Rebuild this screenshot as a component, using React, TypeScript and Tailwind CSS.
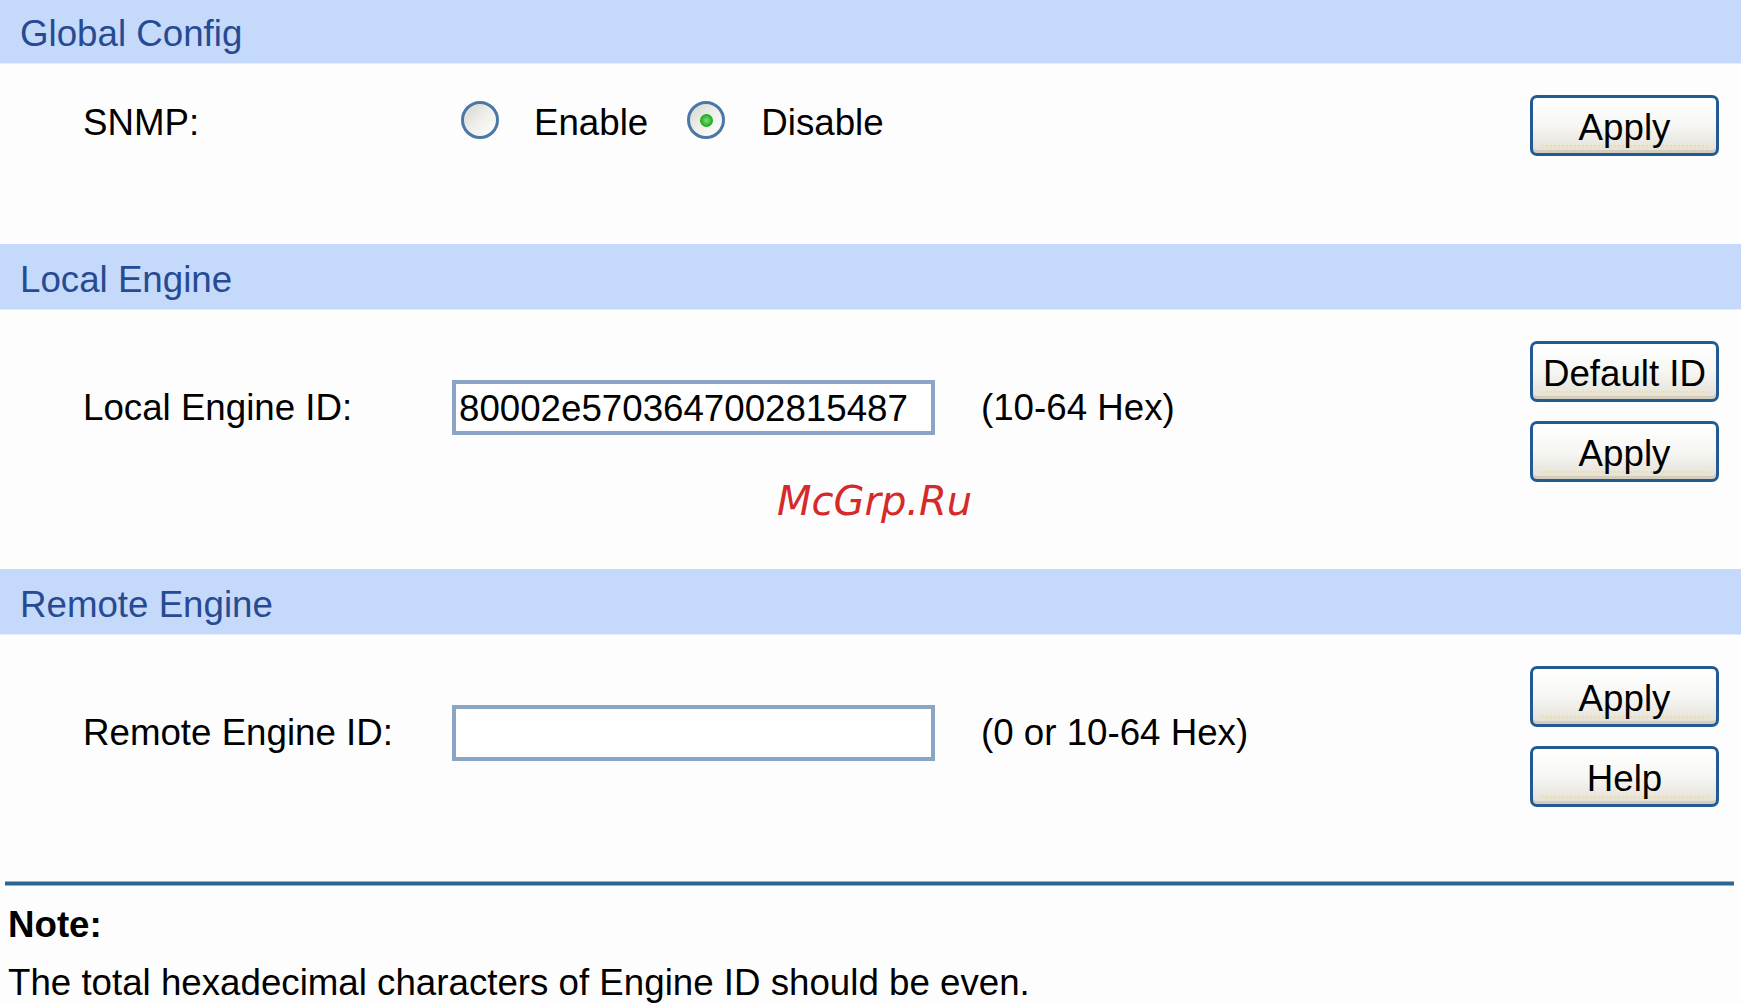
import React from 'react';

const SectionHeader = ({ title, tall = true }: { title: string; tall?: boolean }) => (
  <div
    className={`${tall ? 'h-[66px] pt-[6px]' : 'h-[64px] pt-[4px]'} bg-[#c5d9fb] pl-[20px] flex items-center text-[#274b92] border-b border-[#e4edfd]`}
  >
    {title}
  </div>
);

const XpButton = ({ label }: { label: string }) => (
  <button className="relative w-[189px] h-[61px] rounded-[7px] border-[3px] border-[#235a93] bg-gradient-to-b from-[#ffffff] via-[#f6f6f3] to-[#e2dfd6] text-black leading-none shadow-[inset_0_-3px_0_#d3cdbf]">
    <span className="absolute left-[8px] right-[8px] bottom-[6px] border-b-2 border-dotted border-[#f1dc9c]" />
    <span className="relative top-[3px]">{label}</span>
  </button>
);

const Radio = ({ checked }: { checked?: boolean }) => (
  <span className="w-[38px] h-[38px] rounded-full border-[3px] border-[#4a77a7] bg-gradient-to-br from-[#d6d6d0] via-[#efefeb] to-white flex items-center justify-center mb-[6px]">
    {checked && <span className="w-[13px] h-[13px] rounded-full bg-[radial-gradient(circle,#7fe07f_0%,#22b022_60%,#178a17_100%)]" />}
  </span>
);

export default function App() {
  return (
    <div className="min-h-screen bg-[#fdfdfd] font-['Liberation_Sans',Arial,sans-serif] text-[36.7px] text-black leading-[42px]">
      <SectionHeader title="Global Config" tall={false} />
      <div className="h-[180px] flex items-start">
        <div className="flex-1 mt-[37px] h-[44px] flex items-center">
          <div className="pl-[83px] w-[461px]">SNMP:</div>
          <Radio />
          <span className="ml-[35px]">Enable</span>
          <span className="ml-[39px] flex">
            <Radio checked />
          </span>
          <span className="ml-[36px]">Disable</span>
        </div>
        <div className="mt-[31px] mr-[22px] flex flex-col gap-[19px]">
          <XpButton label="Apply" />
        </div>
      </div>

      <SectionHeader title="Local Engine" />
      <div className="h-[259px] flex items-start">
        <div className="flex-1">
          <div className="mt-[70px] h-[55px] flex items-center">
            <div className="pl-[83px] w-[452px]">Local Engine ID:</div>
            <input
              readOnly
              defaultValue="80002e5703647002815487"
              className="w-[483px] h-[55px] border-[4px] border-[#8aa5c6] bg-white px-[3px] pt-[2px] text-black outline-none"
            />
            <span className="ml-[46px]">(10-64 Hex)</span>
          </div>
          <div className="mt-[42px] ml-[777px] h-[48px] font-['DejaVu_Sans',sans-serif] italic text-[40px] leading-[48px] text-[#d52a2a]">
            McGrp.Ru
          </div>
        </div>
        <div className="mt-[31px] mr-[22px] flex flex-col gap-[19px]">
          <XpButton label="Default ID" />
          <XpButton label="Apply" />
        </div>
      </div>

      <SectionHeader title="Remote Engine" />
      <div className="h-[246px] flex items-start">
        <div className="flex-1">
          <div className="mt-[70px] h-[56px] flex items-center">
            <div className="pl-[83px] w-[452px]">Remote Engine ID:</div>
            <input className="w-[483px] h-[56px] border-[4px] border-[#8aa5c6] bg-white px-[3px] text-black outline-none" />
            <span className="ml-[46px]">(0 or 10-64 Hex)</span>
          </div>
        </div>
        <div className="mt-[31px] mr-[22px] flex flex-col gap-[19px]">
          <XpButton label="Apply" />
          <XpButton label="Help" />
        </div>
      </div>

      <div className="ml-[5px] mr-[7px] h-[5px] bg-[#2c6494] border-t border-b border-[#8fb0cc]" />
      <div className="pl-[8px] mt-[18px] font-bold">Note:</div>
      <div className="pl-[8px] mt-[16px]">The total hexadecimal characters of Engine ID should be even.</div>
    </div>
  );
}
